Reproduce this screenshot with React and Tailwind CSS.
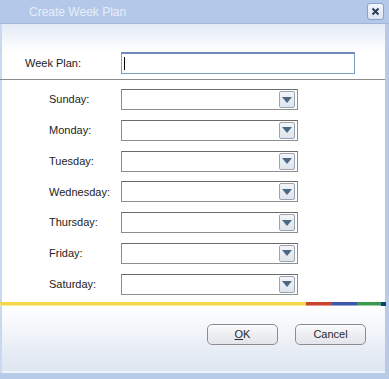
export default function App() {
  const days = ["Sunday", "Monday", "Tuesday", "Wednesday", "Thursday", "Friday", "Saturday"];
  const font = { fontFamily: "'Liberation Sans', Arial, sans-serif" };
  return (
    <div className="w-[389px] h-[379px] bg-[#b7cbe9] flex flex-col overflow-hidden text-[11px] text-[#222]" style={font}>
      {/* Title bar */}
      <div className="h-[24px] shrink-0 flex items-center justify-between bg-[#b4c9ea] border-b border-[#9fb6d9] pl-[29px] pr-[5px]">
        <span className="text-[12px] text-[#e6edf7] leading-none">Create Week Plan</span>
        <div className="w-[17px] h-[17px] rounded-[3px] border border-[#8aa2c6] bg-gradient-to-b from-[#f4f7fc] to-[#d9e3f2] flex items-center justify-center">
          <svg width="9" height="9" viewBox="0 0 9 9">
            <path d="M1.5 1.5 L7.5 7.5 M7.5 1.5 L1.5 7.5" stroke="#2c3e5a" strokeWidth="2" />
          </svg>
        </div>
      </div>
      {/* Content */}
      <div className="flex-1 flex pb-[6px]">
        <div className="flex-1 flex flex-col bg-white border-l-[2px] border-[#c9d8ee] mr-[4px]">
          <div className="bg-gradient-to-b from-[#e3ebf6] to-white h-[28px] shrink-0" />
          {/* Week plan row */}
          <div className="flex items-center h-[22px]">
            <span className="w-[119px] pl-[23px]">Week Plan:</span>
            <div className="w-[234px] h-[22px] border border-[#7f9dc4] border-t-[2px] border-t-[#6c8bb8] bg-white flex items-center pl-[2px]">
              <div className="w-[1px] h-[13px] bg-black" />
            </div>
          </div>
          <div className="h-[1px] bg-[#8c8c8c] mt-[5px] -ml-[2px]" />
          {/* Day rows */}
          <div className="flex flex-col gap-[9.8px] mt-[9px]">
            {days.map((d) => (
              <div key={d} className="flex items-center h-[21px]">
                <span className="w-[119px] pl-[47px]">{d}:</span>
                <div className="w-[177px] h-[21px] border border-[#8e8e8e] border-t-[#6a6a6a] bg-white flex items-center justify-end pr-[2px]">
                  <div className="w-[16px] h-[17px] rounded-[2px] border border-[#9aa4b0] bg-gradient-to-b from-[#f2f5f9] to-[#dfe5ec] flex items-center justify-center">
                    <svg width="10" height="6" viewBox="0 0 10 6">
                      <path d="M0 0 H10 L5 6 Z" fill="#4d6883" />
                    </svg>
                  </div>
                </div>
              </div>
            ))}
          </div>
          {/* Color strip */}
          <div className="mt-[7px] flex h-[4px] -ml-[2px] mr-[-1px]">
            <div className="w-[306px] flex flex-col"><div className="h-[3px] bg-[#f3d94a]" /><div className="h-[1px] bg-[#f8ea9a]" /></div>
            <div className="w-[26px] flex flex-col"><div className="h-[3px] bg-[#c8442c]" /><div className="h-[1px] bg-[#e49a8c]" /></div>
            <div className="w-[25px] flex flex-col"><div className="h-[3px] bg-[#3d58a8]" /><div className="h-[1px] bg-[#97a6d4]" /></div>
            <div className="w-[24px] flex flex-col"><div className="h-[3px] bg-[#3b9a4f]" /><div className="h-[1px] bg-[#9ccda6]" /></div>
            <div className="flex-1 bg-[#123f7c]" />
          </div>
          {/* Footer */}
          <div className="flex-1 bg-gradient-to-b from-white to-[#dde5f1] border-b-[2px] border-[#eef3fa] flex items-start justify-end gap-[17px] pr-[19px] pt-[18px]">
            <button className="w-[71px] h-[21px] rounded-[5px] border border-[#8c8c8c] bg-gradient-to-b from-[#fbfbfc] via-[#eceef1] to-[#e2e6ec] text-[11px] text-[#2a2a2a] flex items-center justify-center" style={font}>
              <span><span className="underline">O</span>K</span>
            </button>
            <button className="w-[71px] h-[21px] rounded-[5px] border border-[#8c8c8c] bg-gradient-to-b from-[#fbfbfc] via-[#eceef1] to-[#e2e6ec] text-[11px] text-[#2a2a2a] flex items-center justify-center" style={font}>
              Cancel
            </button>
          </div>
        </div>
      </div>
    </div>
  );
}
